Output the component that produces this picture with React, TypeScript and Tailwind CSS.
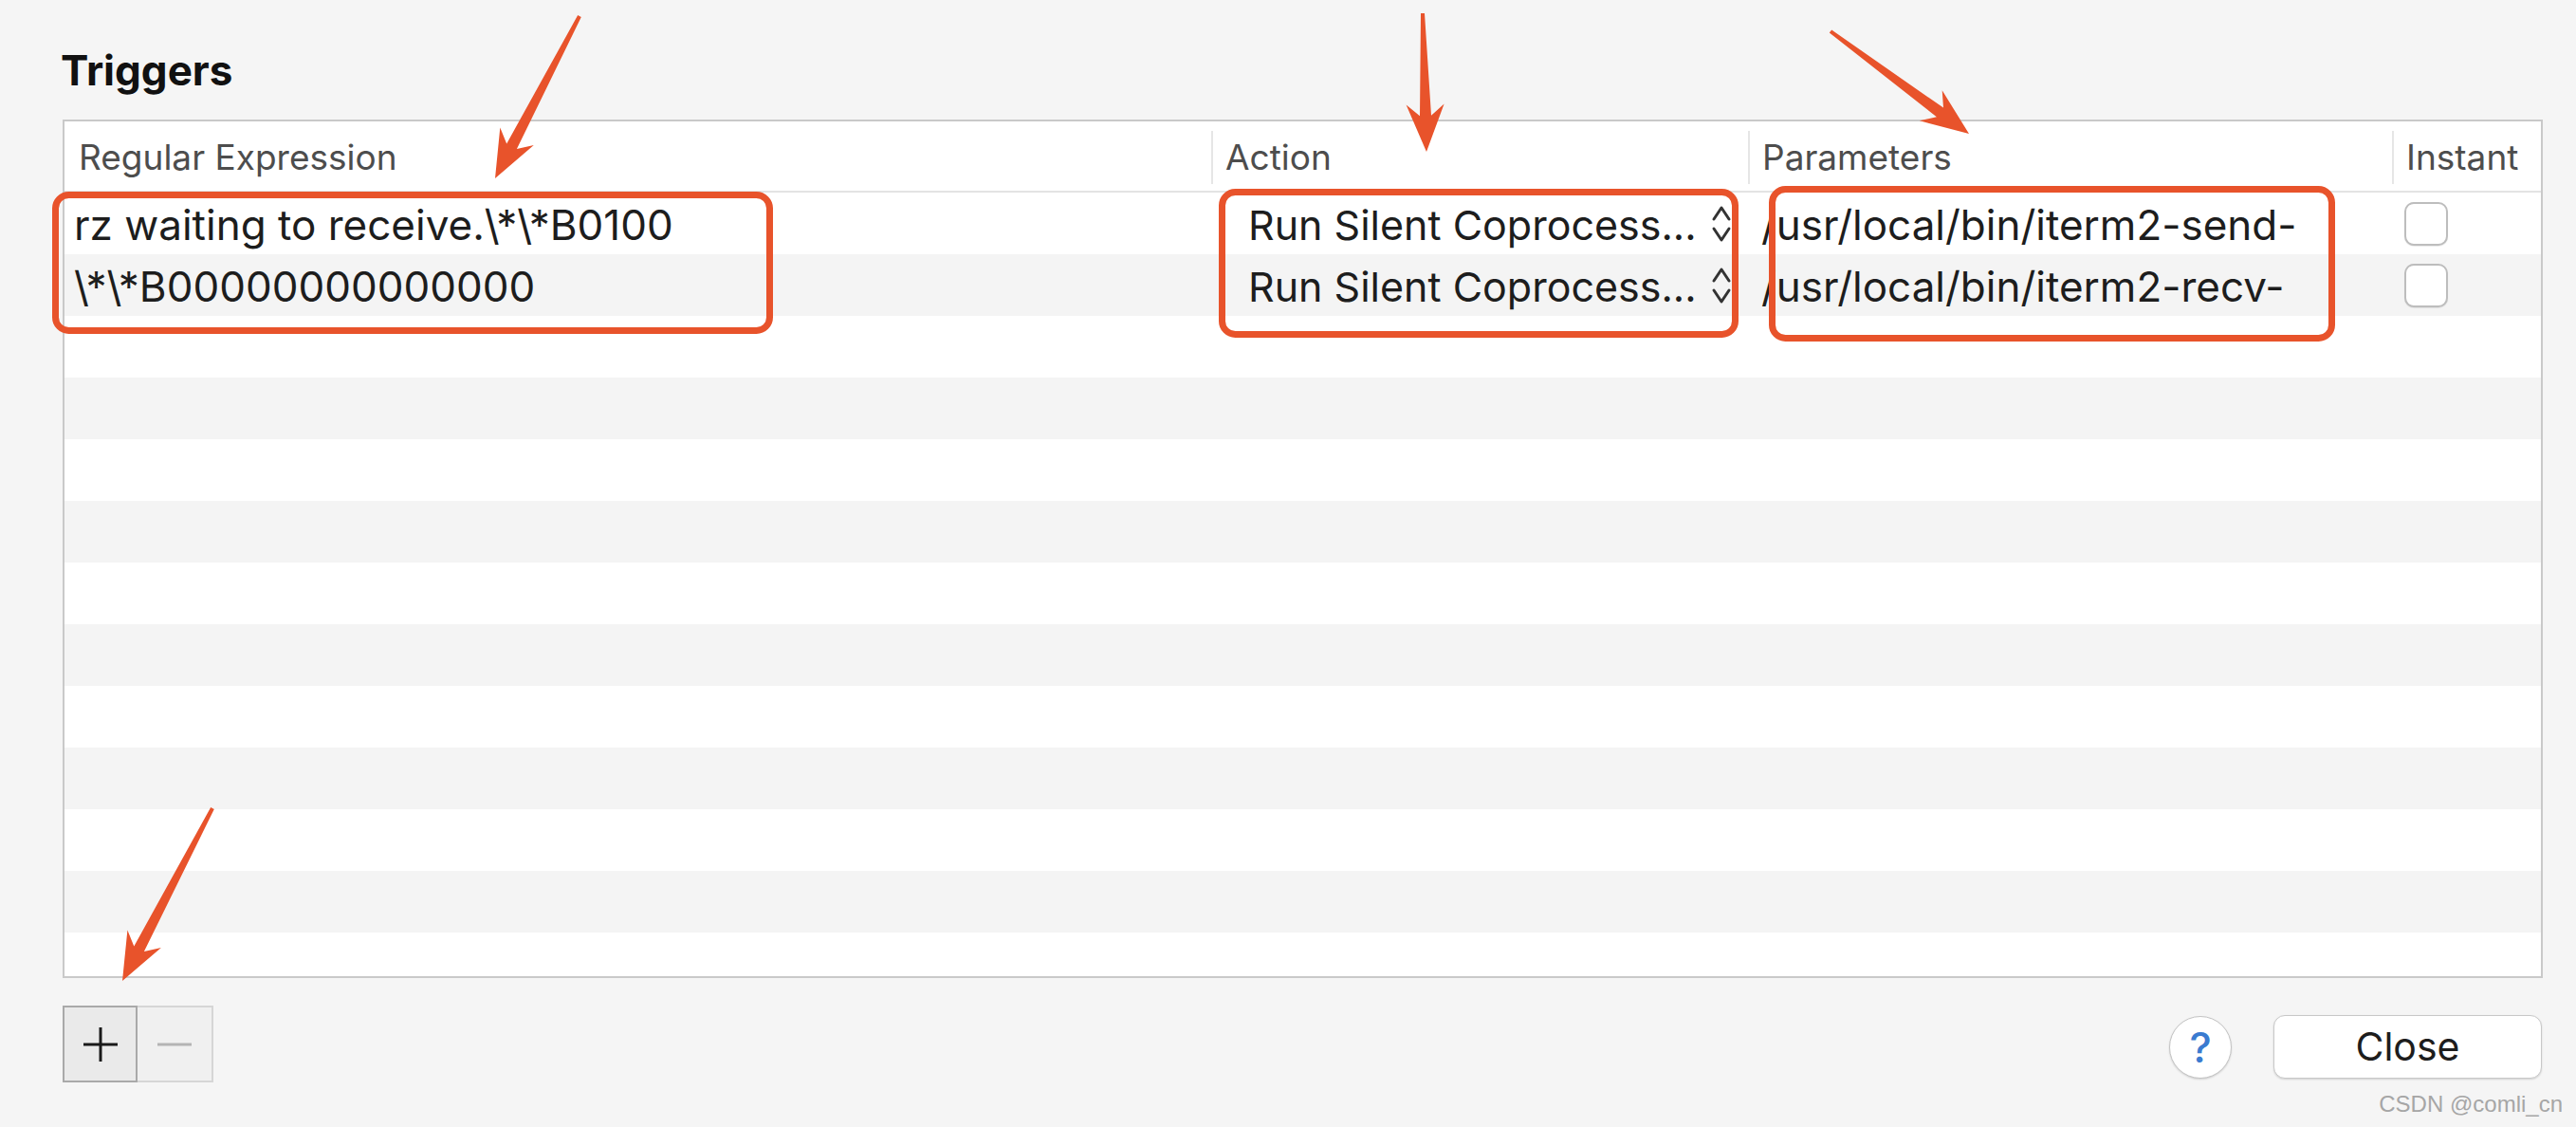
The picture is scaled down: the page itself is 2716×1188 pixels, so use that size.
import React from "react";

type Row = { regex: string; action: string; params: string };

const rows: Row[] = [
  {
    regex: "rz waiting to receive.\\*\\*B0100",
    action: "Run Silent Coprocess...",
    params: "/usr/local/bin/iterm2-send-",
  },
  {
    regex: "\\*\\*B00000000000000",
    action: "Run Silent Coprocess...",
    params: "/usr/local/bin/iterm2-recv-",
  },
];

const ORANGE = "#e8532b";

// tapered annotation arrow, tail -> tip
function arrowPoints(tx: number, ty: number, px: number, py: number) {
  const dx = px - tx;
  const dy = py - ty;
  const len = Math.hypot(dx, dy);
  const ux = dx / len;
  const uy = dy / len;
  const nx = -uy;
  const ny = ux;
  const headLen = 50;
  const headW = 20;
  const notch = 12;
  const tailW = 2;
  const neckW = 6;
  const bx = px - ux * headLen;
  const by = py - uy * headLen;
  const kx = px - ux * (headLen - notch);
  const ky = py - uy * (headLen - notch);
  const pts = [
    [tx + nx * tailW, ty + ny * tailW],
    [kx + nx * neckW, ky + ny * neckW],
    [bx + nx * headW, by + ny * headW],
    [px, py],
    [bx - nx * headW, by - ny * headW],
    [kx - nx * neckW, ky - ny * neckW],
    [tx - nx * tailW, ty - ny * tailW],
  ];
  return pts.map((p) => p.map((v) => v.toFixed(1)).join(",")).join(" ");
}

const arrows = [
  [611, 17, 522, 188],
  [1500, 14, 1504, 160],
  [1930, 33, 2076, 141],
  [224, 852, 129, 1034],
];

const boxes = [
  { x: 55, y: 202, w: 760, h: 150 },
  { x: 1285, y: 199, w: 548, h: 157 },
  { x: 1865, y: 196, w: 597, h: 164 },
];

function Chevrons() {
  return (
    <svg width="24" height="42" viewBox="0 0 24 42" className="shrink-0">
      <path d="M4 16 L12 4 L20 16" fill="none" stroke="#333" strokeWidth="3" strokeLinecap="round" strokeLinejoin="round" />
      <path d="M4 26 L12 38 L20 26" fill="none" stroke="#333" strokeWidth="3" strokeLinecap="round" strokeLinejoin="round" />
    </svg>
  );
}

function Checkbox() {
  return (
    <div className="ml-[13px] w-[46px] h-[46px] rounded-[10px] border-2 border-[#bdbdbd] bg-white shadow-[0_1px_1px_rgba(0,0,0,0.08)]" />
  );
}

export default function App() {
  const empty = Array.from({ length: 11 });
  return (
    <div className="relative w-[2716px] h-[1188px] overflow-hidden bg-[#f5f5f5] font-['Inter','Liberation_Sans',sans-serif] text-[#1d1d1d]">
      <h1 className="pl-[64px] pt-[50px] text-[44px] font-bold leading-[48px] text-[#111]">Triggers</h1>

      <div className="ml-[66px] mt-[28px] w-[2615px] h-[905px] border-2 border-[#c9c9c9] bg-white overflow-hidden">
        <div className="grid grid-cols-[1209px_566px_679px_1fr] h-[75px] border-b-2 border-[#e3e3e3] text-[37px] text-[#4d4d4d]">
          <div className="flex items-center pl-[15px]">Regular Expression</div>
          <div className="flex items-center py-[10px]">
            <div className="h-full flex items-center border-l-2 border-[#e6e6e6] pl-[13px]">Action</div>
          </div>
          <div className="flex items-center py-[10px]">
            <div className="h-full flex items-center border-l-2 border-[#e6e6e6] pl-[13px]">Parameters</div>
          </div>
          <div className="flex items-center py-[10px]">
            <div className="h-full flex items-center border-l-2 border-[#e6e6e6] pl-[13px]">Instant</div>
          </div>
        </div>

        {rows.map((r, i) => (
          <div
            key={i}
            className={`grid grid-cols-[1209px_566px_679px_1fr] h-[65px] text-[44px] ${i % 2 ? "bg-[#f4f4f4]" : "bg-white"}`}
          >
            <div className="flex items-center pl-[10px] pt-[3px] whitespace-nowrap overflow-hidden">{r.regex}</div>
            <div className="flex items-center pl-[39px] pr-[16px] whitespace-nowrap overflow-hidden">
              <span className="pt-[3px] text-[43px]">{r.action}</span>
              <span className="ml-auto">
                <Chevrons />
              </span>
            </div>
            <div className="flex items-center pl-[14px] pt-[3px] whitespace-nowrap overflow-hidden">{r.params}</div>
            <div className="flex items-center">
              <Checkbox />
            </div>
          </div>
        ))}
        {empty.map((_, i) => (
          <div key={i} className={`h-[65px] ${i % 2 ? "bg-[#f4f4f4]" : "bg-white"}`} />
        ))}
      </div>

      <div className="ml-[66px] mr-[36px] mt-[29px] flex items-start justify-between">
        <div className="flex h-[81px]">
          <button className="w-[79px] h-full flex items-center justify-center border-2 border-[#a9a9a9] bg-[#eaeaea]">
            <svg width="40" height="40" viewBox="0 0 40 40">
              <path d="M20 2 V38 M2 20 H38" stroke="#1a1a1a" strokeWidth="3" />
            </svg>
          </button>
          <button className="w-[80px] h-full flex items-center justify-center border-2 border-l-0 border-[#d6d6d6] bg-[#f0f0f0]">
            <svg width="40" height="40" viewBox="0 0 40 40">
              <path d="M2 20 H38" stroke="#b4b4b4" strokeWidth="3" />
            </svg>
          </button>
        </div>
        <div className="mt-[10px] flex items-center gap-[44px]">
          <button className="w-[66px] h-[66px] rounded-full border border-[#c4c4c4] bg-white shadow-[0_1px_2px_rgba(0,0,0,0.15)] flex items-center justify-center text-[44px] font-medium leading-none text-[#3a7bd0]">
            ?
          </button>
          <button className="w-[283px] h-[67px] rounded-[12px] border border-[#c8c8c8] bg-white shadow-[0_1px_2px_rgba(0,0,0,0.15)] text-[41px] leading-none">
            Close
          </button>
        </div>
      </div>

      <div className="absolute right-[14px] bottom-[6px] text-[24px] text-[#a6a6a6] font-['Liberation_Sans',sans-serif]">
        CSDN @comli_cn
      </div>

      <svg className="absolute inset-0 pointer-events-none" width="2716" height="1188">
        {boxes.map((b, i) => (
          <rect
            key={i}
            x={b.x + 3.5}
            y={b.y + 3.5}
            width={b.w - 7}
            height={b.h - 7}
            rx="14"
            fill="none"
            stroke={ORANGE}
            strokeWidth="7"
          />
        ))}
        {arrows.map((a, i) => (
          <polygon key={i} points={arrowPoints(a[0], a[1], a[2], a[3])} fill={ORANGE} />
        ))}
      </svg>
    </div>
  );
}
